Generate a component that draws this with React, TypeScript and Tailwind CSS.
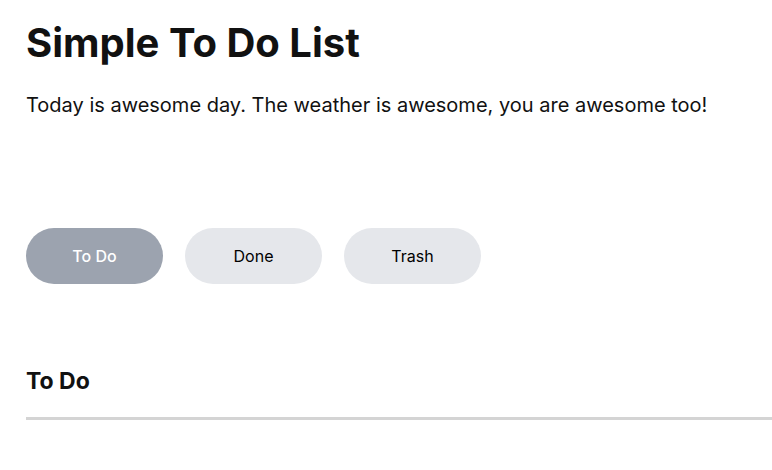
export default function App() {
  const tabs = ['To Do', 'Done', 'Trash']
  const active = 'To Do'

  return (
    <div className="min-h-screen bg-white pl-[26px] pt-[19px] text-[#111111] font-['Inter',sans-serif]">
      <h1 className="text-[40px] font-bold leading-[48px]">Simple To Do List</h1>
      <p className="mt-[24px] text-[20px] leading-[28px]">
        Today is awesome day. The weather is awesome, you are awesome too!
      </p>

      <div className="mt-[109px] flex gap-[22px]">
        {tabs.map((t) => (
          <button
            key={t}
            className={
              t === active
                ? 'h-[56px] w-[137px] rounded-full bg-[#9ca3af] text-[16px] font-medium text-white'
                : 'h-[56px] w-[137px] rounded-full bg-[#e5e7eb] text-[16px] text-black'
            }
          >
            {t}
          </button>
        ))}
      </div>

      <h2 className="mt-[82px] text-[23px] font-bold leading-[30px]">To Do</h2>
      <div className="mt-[21px] h-[3px] bg-[#d4d4d4]" />
    </div>
  )
}
